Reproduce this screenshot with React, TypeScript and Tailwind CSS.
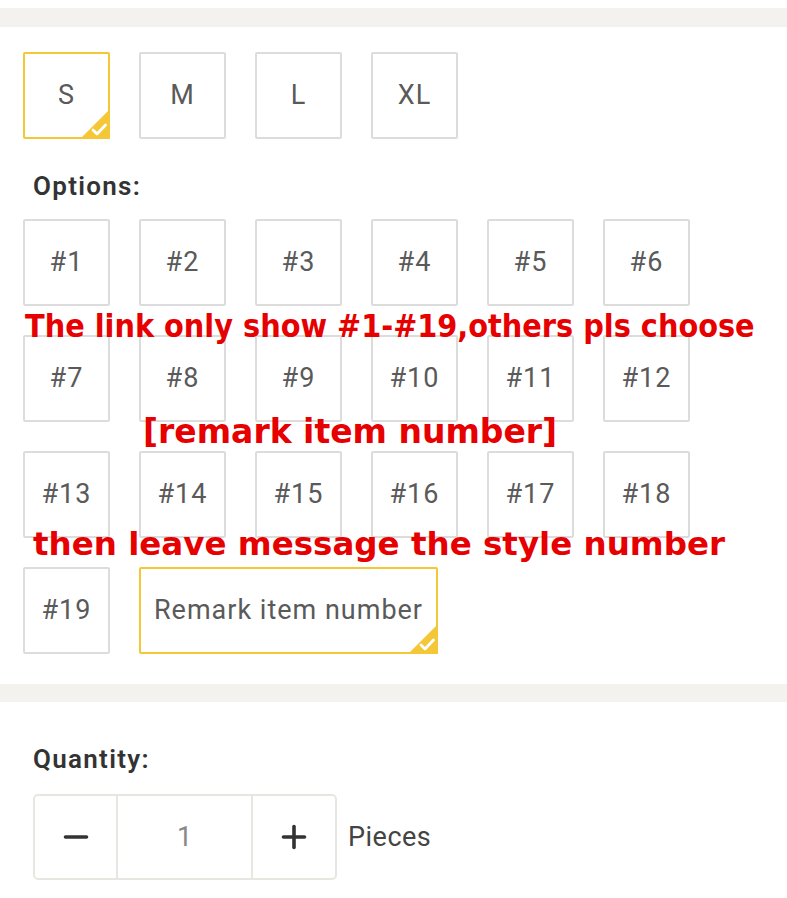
import { Minus, Plus } from "lucide-react";

const SIZES = ["S", "M", "L", "XL"];
const OPTIONS = Array.from({ length: 19 }, (_, i) => `#${i + 1}`);

function CheckCorner() {
  return (
    <svg
      className="absolute -right-[2px] -bottom-[2px]"
      width="30"
      height="30"
      viewBox="0 0 30 30"
    >
      <path d="M30 0 L30 30 L0 30 Z" fill="#f4c736" />
      <path
        d="M13 21 L17 25 L25.5 16"
        fill="none"
        stroke="#fff"
        strokeWidth="2.8"
        strokeLinecap="round"
        strokeLinejoin="round"
      />
    </svg>
  );
}

function Chip({
  label,
  selected = false,
  wide = false,
}: {
  label: string;
  selected?: boolean;
  wide?: boolean;
}) {
  return (
    <div
      className={`relative flex items-center justify-center h-[87px] rounded-[2px] border-2 text-[27px] tracking-[1px] text-[#5a5a5a] ${
        wide ? "w-[299px]" : "w-[87px]"
      } ${selected ? "border-[#f4c736]" : "border-[#dcdcdc]"}`}
    >
      {label}
      {selected && <CheckCorner />}
    </div>
  );
}

export default function App() {
  return (
    <div
      className="relative w-[787px] h-[898px] overflow-hidden bg-white"
      style={{ fontFamily: "Roboto, 'Liberation Sans', Arial, sans-serif" }}
    >
      <div className="h-[8px]" />
      <div className="h-[19px] bg-[#f3f2ee]" />

      <div className="pl-[23px] pt-[25px]">
        <div className="flex gap-[29px]">
          {SIZES.map((s, i) => (
            <Chip key={s} label={s} selected={i === 0} />
          ))}
        </div>

        <div className="pl-[10px] mt-[30px] mb-[16px] text-[26px] tracking-[1.3px] leading-[34px] font-semibold text-[#333]">
          Options:
        </div>

        <div className="grid grid-cols-[repeat(6,87px)] gap-x-[29px] gap-y-[29px]">
          {OPTIONS.map((o) => (
            <Chip key={o} label={o} />
          ))}
          <div className="col-span-3">
            <Chip label="Remark item number" selected wide />
          </div>
        </div>
      </div>

      <div className="mt-[30px] h-[18px] bg-[#f3f2ee]" />

      <div className="pl-[33px] pt-[40px]">
        <div className="text-[26px] tracking-[1.3px] leading-[34px] font-semibold text-[#333]">
          Quantity:
        </div>
        <div className="mt-[18px] flex items-center gap-[11px]">
          <div className="flex h-[86px] rounded-[5px] border-2 border-[#e8e6e0]">
            <div className="w-[83px] flex items-center justify-center border-r-2 border-[#e8e6e0] text-[#333]">
              <Minus size={36} strokeWidth={2.4} />
            </div>
            <div className="w-[135px] flex items-center justify-center border-r-2 border-[#e8e6e0] text-[27px] text-[#888]">
              1
            </div>
            <div className="w-[82px] flex items-center justify-center text-[#333]">
              <Plus size={36} strokeWidth={2.4} />
            </div>
          </div>
          <span className="text-[27px] tracking-[0.5px] text-[#444]">Pieces</span>
        </div>
      </div>

      <div
        className="absolute left-[25px] top-[310px] text-[32px] leading-[32px] font-bold text-[#e60000] whitespace-nowrap font-stretch-condensed"
        style={{ fontFamily: "'DejaVu Sans Condensed', 'DejaVu Sans', sans-serif" }}
      >
        The link only show #1-#19,others pls choose
      </div>
      <div
        className="absolute left-[143px] top-[415px] text-[33px] leading-[33px] font-bold text-[#e60000] whitespace-nowrap"
        style={{ fontFamily: "'DejaVu Sans', sans-serif" }}
      >
        [remark item number]
      </div>
      <div
        className="absolute left-[33px] top-[528px] text-[32.5px] leading-[32px] font-bold text-[#e60000] whitespace-nowrap"
        style={{ fontFamily: "'DejaVu Sans', sans-serif" }}
      >
        then leave message the style number
      </div>
    </div>
  );
}
